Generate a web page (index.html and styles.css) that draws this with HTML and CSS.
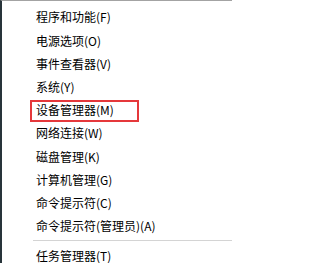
FILE: index.html
```html
<!DOCTYPE html>
<html lang="zh-CN">
<head>
<meta charset="utf-8">
<title>菜单</title>
<link rel="stylesheet" href="styles.css">
</head>
<body>
<div class="menu">
  <ul class="group">
    <li class="item">程序和功能(F)</li>
    <li class="item">电源选项(O)</li>
    <li class="item">事件查看器(V)</li>
    <li class="item">系统(Y)</li>
    <li class="item item-marked">设备管理器(M)<span class="mark"></span></li>
    <li class="item">网络连接(W)</li>
    <li class="item">磁盘管理(K)</li>
    <li class="item">计算机管理(G)</li>
    <li class="item">命令提示符(C)</li>
    <li class="item">命令提示符(管理员)(A)</li>
  </ul>
  <div class="sep"></div>
  <ul class="group">
    <li class="item">任务管理器(T)</li>
  </ul>
</div>
</body>
</html>
```
FILE: styles.css
```css
html, body {
  margin: 0;
  padding: 0;
  background: #ffffff;
}
body {
  width: 232px;
  height: 263px;
  overflow: hidden;
}
.menu {
  box-sizing: border-box;
  height: 263px;
  border-left: 2px solid #28343a;
  border-top: 1px solid #a3a3a3;
  padding-top: 4.4px;
  background: #ffffff;
  font-family: "Noto Sans CJK SC", "Microsoft YaHei", sans-serif;
  font-size: 12px;
  color: #000000;
}
.group {
  list-style: none;
  margin: 0;
  padding: 0;
}
.item {
  height: 23.2px;
  line-height: 23.2px;
  padding-left: 34px;
  white-space: nowrap;
}
.item-marked {
  position: relative;
}
.mark {
  position: absolute;
  left: 28px;
  top: 1.8px;
  width: 109px;
  height: 22px;
  box-sizing: border-box;
  border: 2px solid #e5383b;
}
.sep {
  height: 1px;
  margin: 2.6px 0 3.4px 31px;
  background: #d4d4d4;
}
```
